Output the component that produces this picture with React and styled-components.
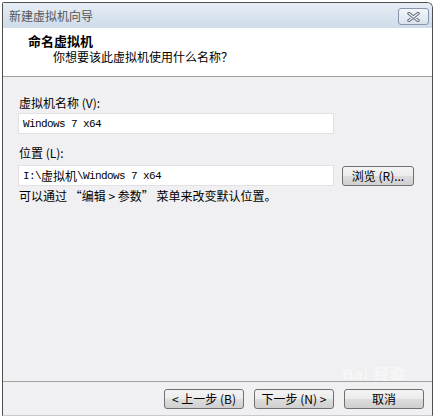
import styled, { createGlobalStyle } from 'styled-components'

const Global = createGlobalStyle`
  html, body {
    margin: 0;
    background: #fff;
    font-family: "Noto Sans CJK SC", "Liberation Sans", sans-serif;
    font-size: 12px;
  }
`;

// 窗口外框
const Window = styled.div`
  position: relative;
  box-sizing: border-box;
  width: 431px;
  height: 414px;
  margin: 2px 0 0 2px;
  display: flex;
  flex-direction: column;
  border: 1px solid #4f4f4f;
  border-bottom-color: #c9c9d2;
  border-top-right-radius: 6px;
  border-top-left-radius: 2px;
  overflow: hidden;
`;

// 标题栏
const TitleBar = styled.div`
  height: 25px;
  flex: none;
  display: flex;
  align-items: center;
  justify-content: space-between;
  padding: 0 3px 0 6px;
  background: linear-gradient(#e6edf5, #cfdbea);
  color: #555;
  line-height: 14px;
`;

const CloseButton = styled.div`
  box-sizing: border-box;
  width: 31px;
  height: 17px;
  margin-top: 2px;
  display: flex;
  align-items: center;
  justify-content: center;
  border: 1px solid #8796aa;
  border-radius: 3px;
  background: linear-gradient(#f3f6fa, #d9e2ed);
`;

// 头部说明
const Header = styled.div`
  box-sizing: border-box;
  height: 49px;
  flex: none;
  padding: 5px 0 0 25px;
  background: #fff;
  border-bottom: 1px solid #a0a0a0;
`;

const HeaderTitle = styled.div`
  font-size: 13px;
  font-weight: bold;
  line-height: 16px;
  color: #000;
`;

const HeaderSub = styled.div`
  padding-left: 25px;
  line-height: 15px;
  color: #000;
`;

// 主体
const Body = styled.div`
  flex: 1;
  padding: 19px 0 0 15px;
  background: #f0eff1;
`;

const Label = styled.div`
  padding-left: 1px;
  line-height: 14px;
  margin-top: ${p => p.$top || 0}px;
  color: #000;
`;

const Row = styled.div`
  display: flex;
  align-items: center;
  gap: 8px;
  margin-top: ${p => p.$top || 0}px;
`;

const Field = styled.div`
  box-sizing: border-box;
  width: 316px;
  height: 21px;
  display: flex;
  align-items: center;
  padding-left: 4px;
  background: #fff;
  border: 1px solid #e2e2e6;
  font-family: "Liberation Mono", monospace;
  font-size: 11px;
  letter-spacing: -0.6px;
  white-space: pre;
  color: #000;
`;

const Cjk = styled.span`
  font-family: "Noto Sans CJK SC", sans-serif;
  font-size: 12px;
  letter-spacing: 0;
`;

const Button = styled.button`
  box-sizing: border-box;
  width: ${p => p.$w || 80}px;
  height: 20px;
  padding: 0;
  border: 1px solid #707070;
  border-radius: 3px;
  background: linear-gradient(#f4f4f4 0%, #ebebeb 48%, #dddddd 52%, #cfcfcf 100%);
  font-family: "Noto Sans CJK SC", sans-serif;
  font-size: 12px;
  line-height: 16px;
  color: #000;
  white-space: pre;
`;

const Hint = styled.div`
  margin-top: 3px;
  padding-left: 1px;
  line-height: 14px;
  color: #000;
  white-space: pre;
`;

// 底部按钮栏
const Footer = styled.div`
  box-sizing: border-box;
  height: 34px;
  flex: none;
  display: flex;
  justify-content: flex-end;
  gap: 10px;
  padding: 7px 8px 0 0;
  background: #f0eff1;
  border-top: 1px solid #a0a0a0;
`;

// 水印
const Watermark = styled.div`
  position: absolute;
  right: 26px;
  bottom: 32px;
  font-family: "Liberation Sans", "Noto Sans CJK SC", sans-serif;
  font-size: 15px;
  font-weight: bold;
  color: rgba(255, 255, 255, 0.55);
  letter-spacing: 1px;
`;

function CloseIcon() {
  return (
    <svg width="13" height="10" viewBox="0 0 13 10">
      <path d="M2 1.5 L11 8.5 M11 1.5 L2 8.5" stroke="#66707f" strokeWidth="3.4" strokeLinecap="round" />
      <path d="M2 1.5 L11 8.5 M11 1.5 L2 8.5" stroke="#eef1f5" strokeWidth="1.3" strokeLinecap="round" />
    </svg>
  );
}

export default function App() {
  return (
    <>
      <Global />
      <Window>
        <TitleBar>
          <span>新建虚拟机向导</span>
          <CloseButton><CloseIcon /></CloseButton>
        </TitleBar>
        <Header>
          <HeaderTitle>命名虚拟机</HeaderTitle>
          <HeaderSub>你想要该此虚拟机使用什么名称？</HeaderSub>
        </Header>
        <Body>
          <Label>虚拟机名称 (V):</Label>
          <Row $top={3}>
            <Field>Windows 7 x64</Field>
          </Row>
          <Label $top={12}>位置 (L):</Label>
          <Row $top={5}>
            <Field>I:\<Cjk>虚拟机</Cjk>\Windows 7 x64</Field>
            <Button $w={72}>浏览 (R)...</Button>
          </Row>
          <Hint>可以通过 “编辑 &gt; 参数” 菜单来改变默认位置。</Hint>
        </Body>
        <Footer>
          <Button>{'< 上一步 (B)'}</Button>
          <Button>{'下一步 (N) >'}</Button>
          <Button>取消</Button>
        </Footer>
        <Watermark>Bai 经验</Watermark>
      </Window>
    </>
  );
}
